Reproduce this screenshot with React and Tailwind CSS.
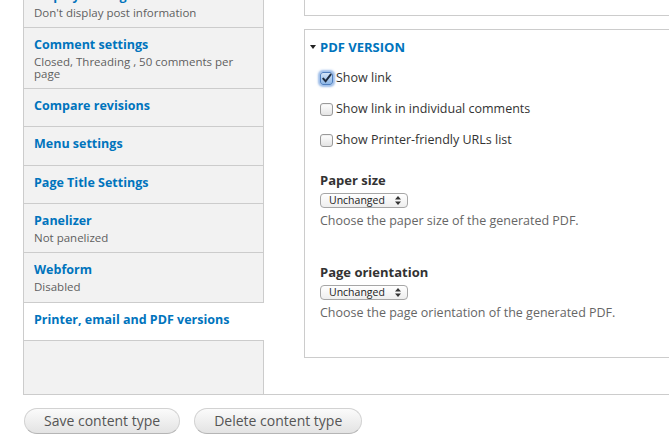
import React from 'react';

const tabs = [
  { title: 'Display settings', summary: "Don't display post information" },
  { title: 'Comment settings', summary: 'Closed, Threading , 50 comments per page' },
  { title: 'Compare revisions' },
  { title: 'Menu settings', loose: true },
  { title: 'Page Title Settings' },
  { title: 'Panelizer', summary: 'Not panelized' },
  { title: 'Webform', summary: 'Disabled', loose: true },
  { title: 'Printer, email and PDF versions', active: true },
];

const options = [
  { label: 'Show link', checked: true },
  { label: 'Show link in individual comments' },
  { label: 'Show Printer-friendly URLs list' },
];

const selects = [
  { label: 'Paper size', description: 'Choose the paper size of the generated PDF.' },
  { label: 'Page orientation', description: 'Choose the page orientation of the generated PDF.' },
];

function TabItem({ tab }) {
  // summary tabs sit tighter at the bottom than title-only ones
  const bottom = tab.summary
    ? tab.loose ? 'pb-[9px]' : 'pb-[8px]'
    : tab.loose ? 'pb-[12px]' : 'pb-[11px]';

  return (
    <li
      className={`w-[240px] border-b border-[#ccc] pl-[10px] pr-[12px] pt-[8px] ${bottom} ${
        tab.active ? 'bg-white' : 'border-r bg-[#f2f2f2]'
      }`}
    >
      <div className="h-[18px] text-[12.5px] font-bold leading-[18px] text-[#0074bd]">{tab.title}</div>
      {tab.summary && (
        <div className="mt-[2px] text-[11.5px] leading-[12px] text-[#5f5f5f]">{tab.summary}</div>
      )}
    </li>
  );
}

function Checkbox({ checked }) {
  if (checked) {
    return (
      <span className="grid h-[13px] w-[13px] shrink-0 place-items-center rounded-[3px] border border-[#4f7fbf] bg-[linear-gradient(#d3e4f7,#8db6e6)] shadow-[0_0_2px_2px_rgba(76,135,213,0.55)]">
        <svg viewBox="0 0 12 12" className="h-[11px] w-[11px]">
          <path d="M2.5 6.2 L5 9 L10.5 1.8" fill="none" stroke="#1d2b3f" strokeWidth="2.2" strokeLinecap="round" />
        </svg>
      </span>
    );
  }

  return (
    <span className="h-[13px] w-[13px] shrink-0 rounded-[3px] border border-[#9a9a9a] bg-[linear-gradient(#ffffff,#e4e4e4)] shadow-[inset_0_1px_1px_rgba(0,0,0,0.06)]" />
  );
}

function Select() {
  return (
    <div className="mt-[4px] flex h-[15px] w-[88px] items-center justify-between rounded-[4px] border border-[#a6a6a6] bg-[linear-gradient(#ffffff,#eeeeee)] pl-[8px] pr-[6px] text-[10.5px] leading-none text-[#222]">
      <span>Unchanged</span>
      <svg width="6" height="9" viewBox="0 0 6 9">
        <path d="M3 0 L6 3.5 H0 Z M3 9 L6 5.5 H0 Z" fill="#333" />
      </svg>
    </div>
  );
}

function Button({ children }) {
  return (
    <button
      type="button"
      className="h-[26px] rounded-full border border-[#d2d2d2] border-b-[#b5b5b5] bg-[linear-gradient(#fbfbfb,#e3e3e3)] px-[19px] text-[14px] leading-none text-[#555]"
    >
      {children}
    </button>
  );
}

export default function App() {
  return (
    <div className="min-h-[439px] overflow-hidden bg-white font-['Open_Sans',sans-serif] text-[#333]">
      <div className="ml-[23px] mt-[-21px] flex border-b border-l border-[#ccc]">
        <ul className="flex flex-col">
          {tabs.map((tab) => (
            <TabItem key={tab.title} tab={tab} />
          ))}
          <li className="w-[240px] flex-1 border-r border-[#ccc] bg-[#f2f2f2]" />
        </ul>

        <div className="flex-1 bg-white pb-[36px] pl-[40px]">
          <div className="h-[37px] border-b border-l border-[#ccc]" />

          <div className="mt-[13px] border-b border-l border-t border-[#ccc] pb-[36px] pt-[8px]">
            <div className="flex h-[18px] items-center gap-[4px] pl-[5px]">
              <svg width="6" height="4" viewBox="0 0 6 4">
                <path d="M0 0 H6 L3 4 Z" fill="#222" />
              </svg>
              <span className="text-[13px] font-bold uppercase leading-[18px] text-[#0074bd]">PDF version</span>
            </div>

            <div className="pl-[15px]">
              {options.map((option) => (
                <label key={option.label} className="mt-[13px] flex h-[18px] items-center gap-[3px]">
                  <Checkbox checked={option.checked} />
                  <span className="text-[12.5px] leading-[18px] text-[#333]">{option.label}</span>
                </label>
              ))}

              {selects.map((item, i) => (
                <div key={item.label} className={i === 0 ? 'mt-[22px]' : 'mt-[34px]'}>
                  <div className="h-[18px] text-[13px] font-bold leading-[18px] text-[#333]">{item.label}</div>
                  <Select />
                  <div className="mt-[5px] text-[12.5px] leading-[16px] text-[#666]">{item.description}</div>
                </div>
              ))}
            </div>
          </div>
        </div>
      </div>

      <div className="ml-[24px] mt-[13px] flex gap-[14px]">
        <Button>Save content type</Button>
        <Button>Delete content type</Button>
      </div>
    </div>
  );
}
